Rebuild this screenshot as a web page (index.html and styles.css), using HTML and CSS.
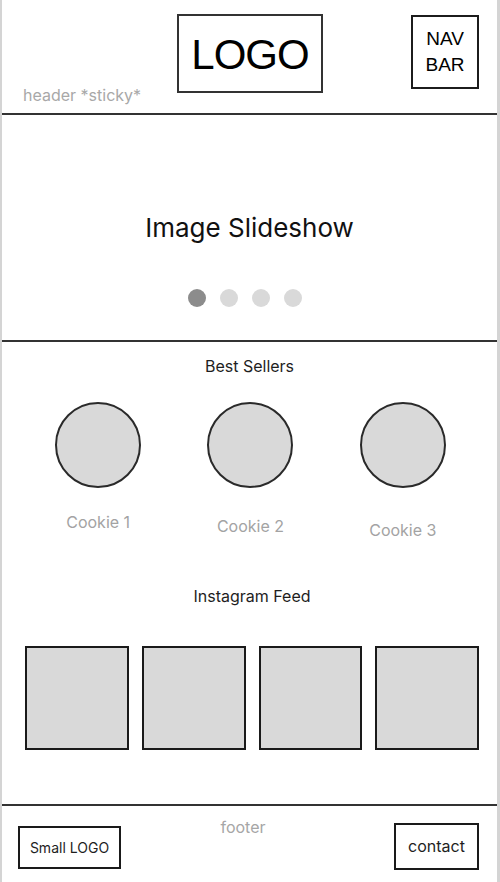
FILE: index.html
```html
<!DOCTYPE html>
<html lang="en">
<head>
<meta charset="utf-8">
<title>Wireframe</title>
<link rel="stylesheet" href="styles.css">
</head>
<body>
<div class="frame">
  <header class="header">
    <span class="header-label">header *sticky*</span>
    <div class="logo">LOGO</div>
    <div class="nav">NAV<br>BAR</div>
  </header>
  <div class="rule"></div>
  <section class="slideshow">
    <h1 class="slide-title">Image Slideshow</h1>
    <div class="dots">
      <span class="dot dot-active"></span>
      <span class="dot"></span>
      <span class="dot"></span>
      <span class="dot"></span>
    </div>
  </section>
  <div class="rule"></div>
  <section class="sellers">
    <h2 class="section-title">Best Sellers</h2>
    <div class="cookies">
      <div class="cookie">
        <div class="cookie-img"></div>
        <p class="cookie-name cookie-name-1">Cookie 1</p>
      </div>
      <div class="cookie">
        <div class="cookie-img"></div>
        <p class="cookie-name cookie-name-2">Cookie 2</p>
      </div>
      <div class="cookie">
        <div class="cookie-img"></div>
        <p class="cookie-name cookie-name-3">Cookie 3</p>
      </div>
    </div>
    <h2 class="section-title insta-title">Instagram Feed</h2>
    <div class="insta-grid">
      <div class="insta-tile"></div>
      <div class="insta-tile"></div>
      <div class="insta-tile"></div>
      <div class="insta-tile"></div>
    </div>
  </section>
  <div class="rule"></div>
  <footer class="footer">
    <div class="small-logo">Small LOGO</div>
    <span class="footer-label">footer</span>
    <div class="contact">contact</div>
  </footer>
</div>
</body>
</html>
```
FILE: styles.css
```css
* {
  box-sizing: border-box;
}

html, body {
  margin: 0;
  padding: 0;
  background: #ffffff;
}

body {
  font-family: Inter, "Noto Sans", sans-serif;
  color: #1e1e1e;
  font-size: 16px;
  line-height: 19px;
}

.frame {
  width: 500px;
  height: 882px;
  border-left: 2px solid #d4d4d4;
  border-right: 3px solid #d4d4d4;
  display: flex;
  flex-direction: column;
  overflow: hidden;
}

.rule {
  height: 2px;
  background: #333333;
  flex: none;
}

/* Header */
.header {
  height: 113px;
  padding: 14px 18px 0 21px;
  display: grid;
  grid-template-columns: 154px 146px 1fr 68px;
  grid-template-rows: 1fr;
  flex: none;
}

.header-label {
  grid-column: 1;
  align-self: end;
  margin-bottom: 8px;
  color: #a8a8a8;
  font-size: 16px;
  line-height: 19px;
}

.logo {
  grid-column: 2;
  align-self: start;
  height: 79px;
  border: 2px solid #333333;
  display: flex;
  align-items: center;
  justify-content: center;
  font-family: "Liberation Sans", Arial, sans-serif;
  font-size: 42px;
  letter-spacing: -1px;
  color: #000000;
  padding-top: 2px;
}

.nav {
  grid-column: 4;
  align-self: start;
  margin-top: 1px;
  height: 74px;
  border: 2px solid #1c1c1c;
  display: flex;
  align-items: center;
  justify-content: center;
  text-align: center;
  font-family: "Liberation Sans", Arial, sans-serif;
  font-size: 19px;
  line-height: 26px;
  color: #000000;
}

/* Slideshow */
.slideshow {
  height: 225px;
  padding-top: 97px;
  display: flex;
  flex-direction: column;
  align-items: center;
  flex: none;
}

.slide-title {
  margin: 0;
  font-size: 26px;
  line-height: 31px;
  font-weight: 400;
  color: #111111;
}

.dots {
  margin-top: 46px;
  margin-right: 10px;
  display: flex;
  gap: 14px;
}

.dot {
  width: 18px;
  height: 18px;
  border-radius: 50%;
  background: #d9d9d9;
}

.dot-active {
  background: #8c8c8c;
}

/* Best sellers + Instagram */
.sellers {
  height: 462px;
  padding-top: 15px;
  display: flex;
  flex-direction: column;
  flex: none;
}

.section-title {
  margin: 0;
  text-align: center;
  font-size: 16px;
  line-height: 19px;
  font-weight: 400;
  color: #1e1e1e;
}

.cookies {
  margin-top: 26px;
  padding: 0 18px 0 20px;
  display: grid;
  grid-template-columns: repeat(3, 1fr);
  align-items: start;
}

.cookie {
  display: flex;
  flex-direction: column;
  align-items: center;
}

.cookie-img {
  width: 86px;
  height: 86px;
  border-radius: 50%;
  border: 2px solid #2a2a2a;
  background: #d9d9d9;
}

.cookie-name {
  margin: 0;
  color: #a3a3a3;
  font-size: 16px;
  line-height: 19px;
}

.cookie-name-1 { margin-top: 25px; }
.cookie-name-2 { margin-top: 29px; }
.cookie-name-3 { margin-top: 33px; }

.insta-title {
  margin-top: 47px;
  padding-left: 5px;
}

.insta-grid {
  margin-top: 40px;
  padding: 0 18px 0 23px;
  display: grid;
  grid-template-columns: repeat(4, 1fr);
  gap: 13px;
}

.insta-tile {
  height: 104px;
  border: 2px solid #1a1a1a;
  background: #d9d9d9;
}

/* Footer */
.footer {
  flex: 1;
  padding: 0 18px 0 16px;
  display: grid;
  grid-template-columns: 103px 1fr 85px;
  align-items: start;
}

.small-logo {
  margin-top: 20px;
  height: 43px;
  border: 2px solid #1a1a1a;
  display: flex;
  align-items: center;
  justify-content: center;
  font-size: 14px;
  color: #1e1e1e;
}

.footer-label {
  justify-self: center;
  margin-top: 12px;
  margin-right: 29px;
  color: #a6a6a6;
  font-size: 16px;
  line-height: 19px;
}

.contact {
  margin-top: 17px;
  height: 47px;
  border: 2px solid #1a1a1a;
  display: flex;
  align-items: center;
  justify-content: center;
  font-size: 16px;
  color: #1e1e1e;
}
```
